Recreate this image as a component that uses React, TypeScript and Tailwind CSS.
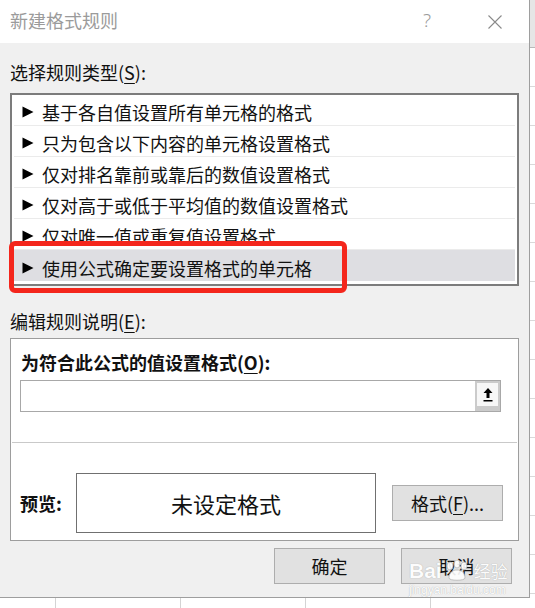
import type { ReactNode } from "react";

const rules = [
  "基于各自值设置所有单元格的格式",
  "只为包含以下内容的单元格设置格式",
  "仅对排名靠前或靠后的数值设置格式",
  "仅对高于或低于平均值的数值设置格式",
  "仅对唯一值或重复值设置格式",
  "使用公式确定要设置格式的单元格",
];

function Key({ children }: { children: ReactNode }) {
  return <span className="underline decoration-1 underline-offset-[3px]">{children}</span>;
}

function Caret() {
  return (
    <svg width="12" height="12" viewBox="0 0 12 12" className="shrink-0">
      <path d="M0.5 0.5L11.5 6L0.5 11.5Z" fill="#000" />
    </svg>
  );
}

function TitleBar() {
  return (
    <div className="flex h-[43px] shrink-0 items-center bg-white pl-[10px] pr-[27px] pb-[3px]">
      <span className="text-[18px] leading-[24px] text-[#9b9b9b]">新建格式规则</span>
      <span className="ml-auto font-['Noto_Sans',sans-serif] text-[19px] font-light leading-[24px] text-[#9b9b9b]">
        ?
      </span>
      <svg width="14" height="14" viewBox="0 0 14 14" className="ml-[57px] mt-[4px]">
        <path d="M0.5 0.5L13.5 13.5M13.5 0.5L0.5 13.5" stroke="#8a8a8a" strokeWidth="1.1" />
      </svg>
    </div>
  );
}

function RuleRow({ text, selected, last }: { text: string; selected?: boolean; last?: boolean }) {
  return (
    <div
      className={
        "flex h-[31px] shrink-0 items-center gap-[8px] pl-[8px] pt-[4px] " +
        (selected ? "bg-[#dedee2] " : "") +
        (last ? "" : "border-b border-[#ebebeb]")
      }
    >
      <Caret />
      <span className="whitespace-nowrap text-[18px] leading-[24px]">{text}</span>
    </div>
  );
}

function RuleList() {
  return (
    <div className="mt-[9px] flex h-[193px] flex-col overflow-hidden border-2 border-[#7c7c7c] bg-white px-[2px]">
      {rules.map((r, i) => (
        <RuleRow key={r} text={r} selected={i === rules.length - 1} last={i === rules.length - 1} />
      ))}
    </div>
  );
}

function UpButton() {
  return (
    <div className="h-full w-[25px] shrink-0 bg-[#cbcbcb] px-[2px] pt-[2px] pb-[5px]">
      <div className="flex h-full items-center justify-center bg-[#f7f7f7]">
        <svg width="20" height="22" viewBox="0 0 20 22">
          <path d="M10 4L14.5 9H11.5V14H8.5V9H5.5Z" fill="#000" />
          <rect x="5.5" y="16" width="9" height="1.5" fill="#000" />
        </svg>
      </div>
    </div>
  );
}

function DialogButton({ children, className = "" }: { children: ReactNode; className?: string }) {
  return (
    <div
      className={
        "flex h-[36px] w-[111px] items-center justify-center border border-[#adadad] bg-[#e1e1e1] text-[18px] leading-[24px] " +
        className
      }
    >
      {children}
    </div>
  );
}

function EditPanel() {
  return (
    <div className="mt-[5px] flex h-[203px] flex-col border border-[#9d9d9d] bg-white">
      <div className="mt-[11px] pl-[10px] text-[18px] font-bold leading-[24px]">
        为符合此公式的值设置格式(<Key>O</Key>):
      </div>
      <div className="ml-[9px] mt-[6px] flex h-[32px] w-[481px] border border-[#a8a8a8] bg-white">
        <div className="flex-1" />
        <UpButton />
      </div>
      <div className="mx-[1px] mt-[30px] h-px bg-[#c9c9c9]" />
      <div className="mt-[30px] flex h-[60px] items-center pl-[9px]">
        <span className="w-[56px] text-[18px] font-bold leading-[24px]">预览:</span>
        <div className="flex h-[60px] w-[300px] items-center justify-center border border-[#707070] text-[22px] leading-[30px]">
          未设定格式
        </div>
        <DialogButton className="ml-[16px] w-[110px]">
          格式(<Key>F</Key>)...
        </DialogButton>
      </div>
    </div>
  );
}

function Dialog() {
  return (
    <div className="flex h-[598px] w-[530px] shrink-0 flex-col border-r border-b border-[#9e9e9e]">
      <TitleBar />
      <div className="flex flex-1 flex-col bg-[#f0f0f0] px-[10px]">
        <div className="mt-[17px] text-[18px] leading-[24px]">
          选择规则类型(<Key>S</Key>):
        </div>
        <RuleList />
        <div className="mt-[23px] text-[18px] leading-[24px]">
          编辑规则说明(<Key>E</Key>):
        </div>
        <EditPanel />
        <div className="mt-[7px] flex justify-end gap-[16px] pr-[7px]">
          <DialogButton>确定</DialogButton>
          <DialogButton>取消</DialogButton>
        </div>
      </div>
    </div>
  );
}

function SheetEdge() {
  return (
    <div className="flex flex-1 flex-col">
      <div className="h-[48px] shrink-0 border-b border-[#b9b9b9] bg-[#e6e6e6]" />
      {Array.from({ length: 15 }).map((_, i) => (
        <div key={i} className="h-[39px] shrink-0 border-b border-[#d9d9d9]" />
      ))}
    </div>
  );
}

function SheetBottom() {
  return (
    <div className="flex h-[10px]">
      <div className="w-[56px] shrink-0 border-r border-[#d4d4d4]" />
      {Array.from({ length: 4 }).map((_, i) => (
        <div key={i} className="w-[125px] shrink-0 border-r border-[#d4d4d4]" />
      ))}
    </div>
  );
}

function Watermark() {
  return (
    <div className="pointer-events-none absolute left-[409px] top-[560px] flex flex-col items-start text-white opacity-90">
      <div className="flex items-center font-['Liberation_Sans',sans-serif] text-[21px] font-bold leading-[22px] [text-shadow:0_0_1px_#9a9a9a]">
        <span>Bai</span>
        <svg width="30" height="22" viewBox="0 0 30 22" className="mx-[1px]">
          <g fill="#fff" stroke="#b0b0b0" strokeWidth="0.8">
            <ellipse cx="7" cy="6" rx="3" ry="4" />
            <ellipse cx="14" cy="4" rx="3" ry="4" />
            <ellipse cx="21" cy="6" rx="3" ry="4" />
            <path d="M6 18C6 12 10 10 14 10C18 10 22 12 22 18C22 21 6 21 6 18Z" />
          </g>
        </svg>
        <span className="font-['Noto_Sans_CJK_SC',sans-serif] text-[17px] font-normal">经验</span>
      </div>
      <span className="mt-[2px] font-['Liberation_Sans',sans-serif] text-[12px] leading-[12px] [text-shadow:0_0_1px_#9a9a9a]">
        jingyan.baidu.com
      </span>
    </div>
  );
}

export default function App() {
  return (
    <div className="relative h-[608px] w-[535px] overflow-hidden bg-white font-['Noto_Sans_CJK_SC','Noto_Sans',sans-serif] text-[#111]">
      <div className="flex h-[598px]">
        <Dialog />
        <SheetEdge />
      </div>
      <SheetBottom />
      <div className="pointer-events-none absolute left-[9px] top-[241px] h-[52px] w-[338px] rounded-[6px] border-[5px] border-[#f4261c]" />
      <Watermark />
    </div>
  );
}
